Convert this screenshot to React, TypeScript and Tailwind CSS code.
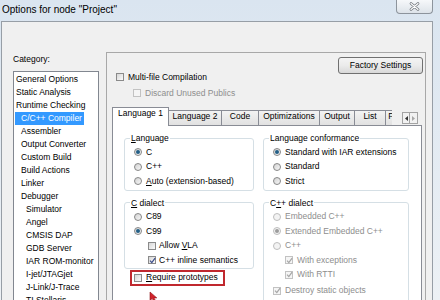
import React from "react";

type Opt = { on?: boolean; off?: boolean };

function Radio({ on, off }: Opt) {
  return (
    <span
      className={`flex h-[8px] w-[8px] shrink-0 items-center justify-center rounded-full border ${
        off ? "border-[#bdbdbd] bg-[#f3f3f3]" : "border-[#878787] bg-linear-to-br from-[#d2d2d2] to-[#f8f8f8]"
      }`}
    >
      {on && <span className={`h-[4px] w-[4px] rounded-full ${off ? "bg-[#9c9c9c]" : "bg-[#235f86]"}`} />}
    </span>
  );
}

function Box({ on, off }: Opt) {
  return (
    <span
      className={`flex h-[8px] w-[8px] shrink-0 items-center justify-center border ${
        off ? "border-[#c2c2c2] bg-[#f5f5f5]" : "border-[#8a8a8a] bg-linear-to-br from-[#d6d6d6] to-[#fbfbfb]"
      }`}
    >
      {on && (
        <svg width="7" height="7" viewBox="0 0 8 8" className="shrink-0">
          <path d="M1.2 4.2 L3.2 6.4 L7 1.2" fill="none" stroke={off ? "#a6a6a6" : "#3b4d8a"} strokeWidth="1.4" />
        </svg>
      )}
    </span>
  );
}

const tree: [string, number][] = [
  ["General Options", 0],
  ["Static Analysis", 0],
  ["Runtime Checking", 0],
  ["C/C++ Compiler", 1],
  ["Assembler", 1],
  ["Output Converter", 1],
  ["Custom Build", 1],
  ["Build Actions", 1],
  ["Linker", 1],
  ["Debugger", 1],
  ["Simulator", 2],
  ["Angel", 2],
  ["CMSIS DAP", 2],
  ["GDB Server", 2],
  ["IAR ROM-monitor", 2],
  ["I-jet/JTAGjet", 2],
  ["J-Link/J-Trace", 2],
  ["TI Stellaris", 2],
];
const indent = ["pl-[2px]", "pl-[7px]", "pl-[12px]"];

const tabs: [string, string][] = [
  ["Language 2", "w-[53px] -ml-px"],
  ["Code", "w-[37px]"],
  ["Optimizations", "w-[61px]"],
  ["Output", "w-[35px]"],
  ["List", "w-[31px]"],
  ["Preprocessor", "w-[56px]"],
];

const gray = "text-[#8e8e8e]";

export default function App() {
  return (
    <div className="relative flex h-[300px] w-[440px] flex-col overflow-hidden bg-linear-to-b from-[#dae5f0] to-[#edf1f5] font-['Liberation_Sans',Arial,sans-serif] text-[8.5px] text-black">
      {/* title bar */}
      <div className="flex h-[21px] shrink-0 items-start justify-between">
        <span className="pl-[2px] pt-[4px] text-[10px] leading-[12px]">Options for node "Project"</span>
        <div className="mr-[7px] flex h-[14px] w-[37px] items-center justify-center rounded-b-[4px] border border-t-0 border-[#8d949c] bg-linear-to-b from-[#f6f8fa] to-[#dde3e9]">
          <svg width="11" height="9" viewBox="0 0 11 9">
            <path d="M2 1.5 L9 7.5 M9 1.5 L2 7.5" stroke="#6d7278" strokeWidth="2.6" strokeLinecap="round" />
            <path d="M2 1.5 L9 7.5 M9 1.5 L2 7.5" stroke="#ffffff" strokeWidth="1.2" strokeLinecap="round" />
          </svg>
        </div>
      </div>

      {/* dialog body */}
      <div className="ml-[1px] mr-[7px] flex min-h-0 flex-1 border-l border-r border-t border-[#979ea6] bg-[#f0f0f0]">
        <div className="flex w-[104px] shrink-0 flex-col pl-[11px] pt-[32px]">
          <div className="leading-[11px]">Category:</div>
          <div className="mt-[6px] w-[86px] flex-1 border border-[#828790] bg-white pt-[1px]">
            {tree.map(([name, lvl]) =>
              name === "C/C++ Compiler" ? (
                <div key={name} className="flex h-[13px] leading-[13px]">
                  <span className="ml-[1px] bg-[#3399ff] pl-[6px] pr-[2px] text-white">{name}</span>
                </div>
              ) : (
                <div key={name} className={`h-[13px] whitespace-nowrap leading-[13px] ${indent[lvl]}`}>
                  {name}
                </div>
              )
            )}
          </div>
        </div>

        <div className="mr-[6px] mt-[30px] flex min-w-0 flex-1 flex-col border-l border-r border-t border-[#a8a8a8]">
          <div className="flex items-start justify-between pr-[2px] pt-[4px]">
            <div className="mt-[14px] pl-[9px]">
              <div className="flex h-[12px] items-center gap-[4px]">
                <Box />
                Multi-file Compilation
              </div>
              <div className={`mt-[4px] flex h-[12px] items-center gap-[4px] pl-[17px] ${gray}`}>
                <Box off />
                Discard Unused Publics
              </div>
            </div>
            <button className="h-[17px] w-[85px] rounded-[3px] border border-[#707070] bg-linear-to-b from-[#f4f4f4] via-[#ebebeb] to-[#d8d8d8] text-[8.5px] leading-[15px]">
              Factory Settings
            </button>
          </div>

          <div className="ml-[5px] mr-[3px] mt-[8px] flex flex-1 flex-col">
            <div className="flex h-[18px] items-end">
              <div className="relative z-10 -mb-px flex h-[19px] w-[57px] shrink-0 justify-center border-l border-r border-t border-[#898c95] bg-white leading-[11px]">
                Language 1
              </div>
              <div className="flex h-[18px] min-w-0 flex-1 items-end overflow-hidden">
                {tabs.map(([t, w]) => (
                  <div
                    key={t}
                    className={`flex h-[15px] shrink-0 justify-center border-l border-t border-[#898c95] bg-linear-to-b from-[#f3f3f3] to-[#e1e1e1] leading-[11px] ${w}`}
                  >
                    {t}
                  </div>
                ))}
              </div>
              <div className="mb-px ml-[10px] mr-[4px] flex h-[12px] w-[16px] shrink-0">
                <div className="flex w-[8px] items-center justify-center border border-[#a3a3a3] bg-[#f2f2f2]">
                  <svg width="3" height="5" viewBox="0 0 3 5"><path d="M3 0 L0 2.5 L3 5 Z" fill="#333" /></svg>
                </div>
                <div className="flex w-[8px] items-center justify-center border border-l-0 border-[#a3a3a3] bg-[#f2f2f2]">
                  <svg width="3" height="5" viewBox="0 0 3 5"><path d="M0 0 L3 2.5 L0 5 Z" fill="#a8a8a8" /></svg>
                </div>
              </div>
            </div>

            <div className="flex flex-1 gap-[9px] border border-[#898c95] bg-white pl-[11px] pt-[7px]">
              {/* left column */}
              <div className="w-[130px] shrink-0">
                <fieldset className="rounded-[3px] border border-[#d5dfe5] pb-[1px]">
                  <legend className="ml-[5px] px-[1px] leading-[10px]">
                    <span className="underline">L</span>anguage
                  </legend>
                  <div className="pl-[9px] pt-[2px]">
                    <div className="flex h-[14.5px] items-center gap-[4px]"><Radio on />C</div>
                    <div className="flex h-[14.5px] items-center gap-[4px]"><Radio />C++</div>
                    <div className="flex h-[14.5px] items-center gap-[4px]"><Radio /><span><span className="underline">A</span>uto (extension-based)</span></div>
                  </div>
                </fieldset>
                <fieldset className="mt-[7px] rounded-[3px] border border-[#d5dfe5]">
                  <legend className="ml-[5px] px-[1px] leading-[10px]">
                    <span className="underline">C</span> dialect
                  </legend>
                  <div className="pl-[9px] pt-[2px]">
                    <div className="flex h-[14.5px] items-center gap-[4px]"><Radio />C89</div>
                    <div className="flex h-[14.5px] items-center gap-[4px]"><Radio on />C99</div>
                    <div className="flex h-[14.5px] items-center gap-[3px] pl-[14px]"><Box /><span>Allow <span className="underline">V</span>LA</span></div>
                    <div className="flex h-[14.5px] items-center gap-[3px] pl-[14px]"><Box on />C++ inline semantics</div>
                  </div>
                </fieldset>
                <div className="ml-[6px] mt-[1px] flex h-[16px] w-[95px] items-center gap-[4px] border-2 border-[#c0282e] pl-[2px]">
                  <Box />
                  <span><span className="underline">R</span>equire prototypes</span>
                </div>
              </div>

              {/* right column */}
              <div className="w-[146px] shrink-0">
                <fieldset className="rounded-[3px] border border-[#d5dfe5] pb-[1px]">
                  <legend className="ml-[5px] px-[1px] leading-[10px]">Language conformance</legend>
                  <div className="pl-[9px] pt-[2px]">
                    <div className="flex h-[14.5px] items-center gap-[4px]"><Radio on />Standard with IAR extensions</div>
                    <div className="flex h-[14.5px] items-center gap-[4px]"><Radio />Standard</div>
                    <div className="flex h-[14.5px] items-center gap-[4px]"><Radio />Strict</div>
                  </div>
                </fieldset>
                <fieldset className="mt-[7px] rounded-[3px] border border-[#d5dfe5] pb-[10px]">
                  <legend className="ml-[5px] px-[1px] leading-[10px]">
                    C<span className="underline">+</span>+ dialect
                  </legend>
                  <div className={`pl-[9px] pt-[2px] ${gray}`}>
                    <div className="flex h-[14.5px] items-center gap-[4px]"><Radio off />Embedded C++</div>
                    <div className="flex h-[14.5px] items-center gap-[4px]"><Radio on off />Extended Embedded C++</div>
                    <div className="flex h-[14.5px] items-center gap-[4px]"><Radio off />C++</div>
                    <div className="flex h-[14.5px] items-center gap-[4px] pl-[12px]"><Box on off />With exceptions</div>
                    <div className="flex h-[14.5px] items-center gap-[4px] pl-[12px]"><Box on off />With RTTI</div>
                    <div className="mt-[1.5px] flex h-[14.5px] items-center gap-[4px]"><Box on off />Destroy static objects</div>
                  </div>
                </fieldset>
              </div>
            </div>
          </div>
        </div>
      </div>

      {/* mouse pointer */}
      <svg className="absolute left-[149px] top-[291px]" width="10" height="11" viewBox="0 0 10 11">
        <path d="M1 1 L1 9.5 L3.2 7.6 L5 10.5 L6.6 9.7 L4.9 6.9 L7.8 6.9 Z" fill="#d3232b" stroke="#8d1418" strokeWidth="0.6" />
      </svg>
    </div>
  );
}
